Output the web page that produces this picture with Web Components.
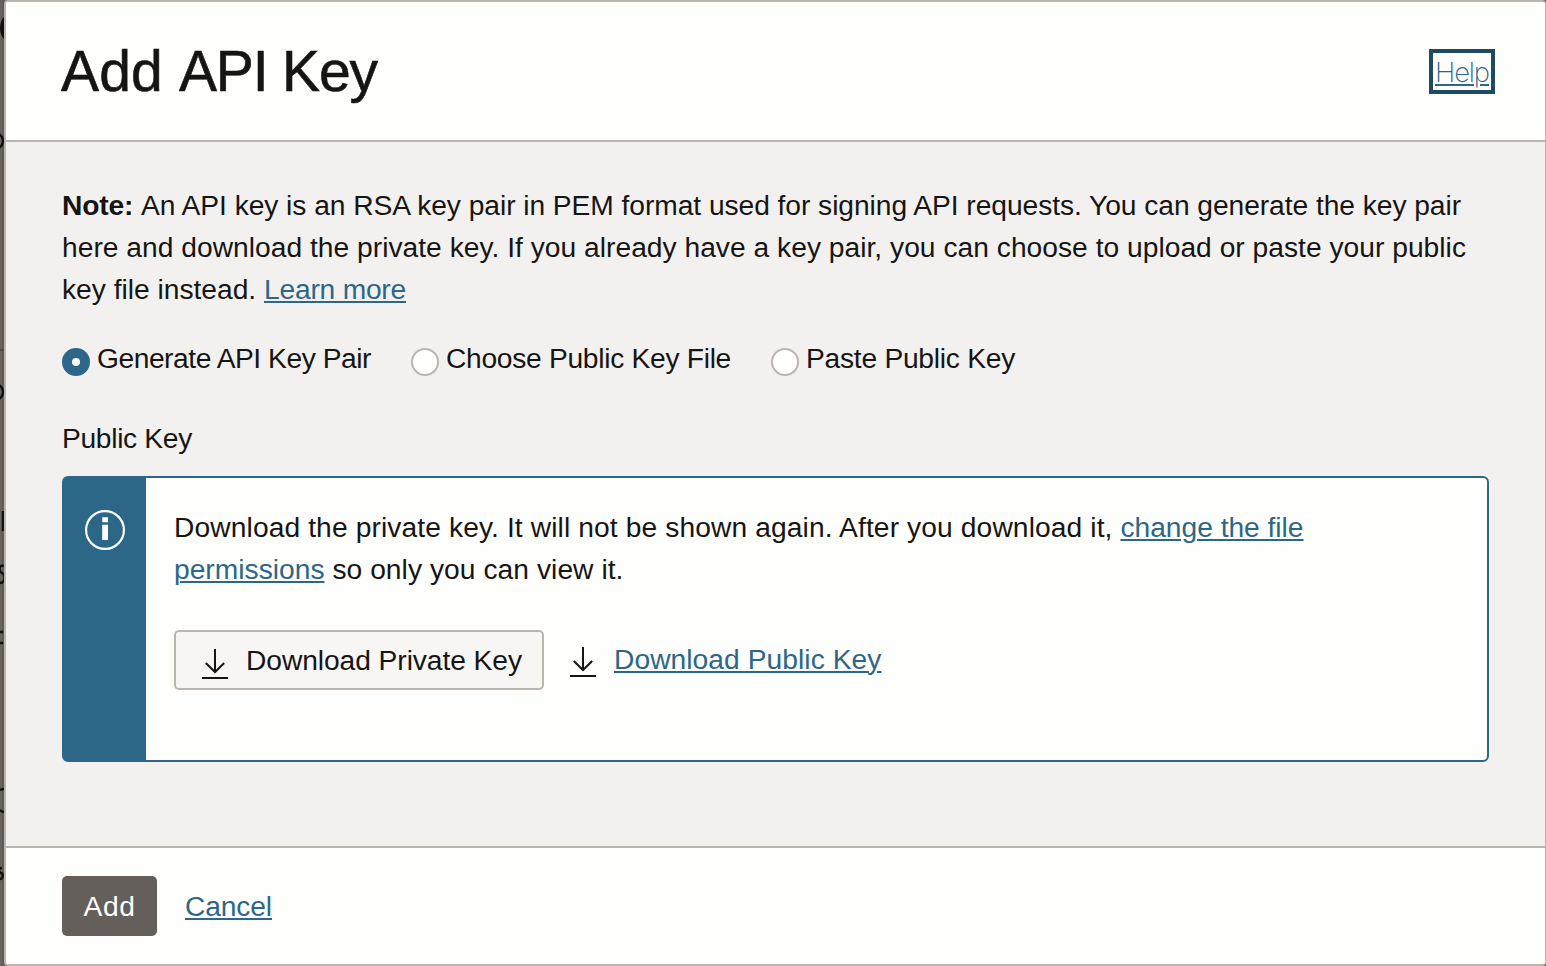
<!DOCTYPE html>
<html lang="en">
<head>
<meta charset="utf-8">
<title>Add API Key</title>
<style>
html,body{margin:0;height:100%;overflow:hidden;background:#67635f}
body{font-family:"Liberation Sans",Arial,sans-serif;font-size:28.2px;line-height:42px;color:#161513}
</style>
</head>
<body>
<key-dialog></key-dialog>
<script>
const define=(name,html,connected)=>customElements.define(name,class extends HTMLElement{
  constructor(){super();this.attachShadow({mode:'open'}).innerHTML=html;}
  connectedCallback(){if(connected)connected.call(this);}
});

// Tracks its slotted text so that the run occupies the width given in "w".
define('text-run',`<style>
:host{display:inline-block;white-space:pre;vertical-align:baseline;flex:none}
:host([link]){color:#2c6788;text-decoration:underline;text-decoration-thickness:2px;text-underline-offset:2px;cursor:pointer}
</style><slot></slot>`,function(){
  const target=parseFloat(this.getAttribute('w'));
  const natural=this.getBoundingClientRect().width;
  this.style.letterSpacing=((target-natural)/this.textContent.length)+'px';
  this.style.width=target+'px';
});

define('download-icon',`<style>
:host{display:block;flex:none;width:26px;height:32px}
svg{display:block}
</style><svg width="26" height="32" viewBox="0 0 26 32" fill="none" stroke="#161513" stroke-width="2"><path d="M13 1v23M3.8 15l9.2 9 9.2-9M0 30h26"/></svg>`);

define('radio-option',`<style>
:host{display:flex;height:42px;flex:none}
i{box-sizing:border-box;width:28px;height:28px;margin:11px 7px 0 0;border:2px solid #bbb5b0;border-radius:50%;background:#fefefc;flex:none}
:host([checked]) i{border:10px solid #2c6788}
</style><i></i><slot></slot>`);

define('info-alert',`<style>
:host{display:flex;box-sizing:border-box;width:1427px;height:286px;border:2px solid #2c6788;border-radius:6px;background:linear-gradient(90deg,#2c6788 84px,#fefefc 84px) border-box;overflow:hidden}
aside{width:82px;flex:none}
svg{display:block;margin:32px 0 0 21px}
section{padding:28px 0 0 28px}
</style><aside><svg width="40" height="40" viewBox="0 0 40 40"><circle cx="20" cy="20" r="18.9" fill="none" stroke="#fff" stroke-width="2.2"/><path fill="#fff" d="M17.3 7.3h5.7v4.9h-5.7zM17.2 14.7h5.8v15.3h-5.8z"/></svg></aside><section><slot></slot></section>`);

define('action-button',`<style>
:host{display:flex;box-sizing:border-box;height:60px;border-radius:5px;flex:none}
:host([kind=primary]){width:95px;padding:9px 0 0 21.5px;background:#645f5b;color:#fff}
:host([kind=outline]){width:370px;padding:7px 0 0 26px;border:2px solid #bbb5b0;background:#f7f6f5}
</style><slot></slot>`);

define('page-backdrop',`<style>
:host{display:block;width:4px;height:966px;flex:none;background:linear-gradient(90deg,#6a6663,#5b5855)}
svg{display:block}
</style><svg width="4" height="966" viewBox="0 0 4 966" fill="none" stroke="#11100f" stroke-width="2.4"><ellipse cx="7" cy="28" rx="7" ry="12" fill="#11100f" stroke="none"/><ellipse cx="-3" cy="141" rx="6" ry="7"/><path stroke="#4b4846" stroke-width="2" d="M0 350h4"/><ellipse cx="-3" cy="392" rx="6" ry="7"/><path d="M3 511v20M4 566c-5-2-6 5-2 7c4 2 3 10-2 10M0 632h3M0 643h3M0 790q2-1 4-1M0 810q2 2 4 2M2 868c-4 0-4 4-1 5s2 6-1 6"/></svg>`);

define('key-dialog',`<style>
:host{display:flex;width:1546px;height:966px}
main{box-sizing:border-box;width:1542px;height:966px;border:2px solid #bbb5b0;border-right-width:1px;border-radius:4px;background:#f3f1f0;display:flex;flex-direction:column;overflow:hidden}
header{height:138px;display:flex;justify-content:space-between;background:#fefefc;border-bottom:2px solid #bbb5b0;flex:none}
h1{display:flex;margin:37px 0 0 55px;font-weight:400;font-size:57px;line-height:64px;-webkit-text-stroke:.6px #161513}
.help{box-sizing:border-box;width:66px;height:45px;margin:47px 50px 0 0;border:4px solid #204a61;padding:0 0 0 2px;font:200 27.5px/39px Inter,sans-serif}
.body{flex:1;min-height:0;padding:42px 0 0 56px}
.line{display:flex;height:42px}
.radios{display:flex;margin-top:27px}
.label{margin-top:38px;height:59px}
.actions{display:flex;margin-top:40px}
footer{height:118px;display:flex;background:#fefefc;border-top:2px solid #bbb5b0;flex:none;padding:28px 0 0 56px;box-sizing:border-box}
</style>
<page-backdrop></page-backdrop>
<main>
<header><h1><text-run w="118">Add </text-run><text-run w="103">API </text-run><text-run w="95">Key</text-run></h1><div class="help"><text-run link w="54">Help</text-run></div></header>
<div class="body">
<div class="line"><text-run w="79"><b>Note:</b> </text-run><text-run w="1320">An API key is an RSA key pair in PEM format used for signing API requests. You can generate the key pair</text-run></div>
<div class="line"><text-run w="1404">here and download the private key. If you already have a key pair, you can choose to upload or paste your public</text-run></div>
<div class="line"><text-run w="202">key file instead. </text-run><text-run link w="142">Learn more</text-run></div>
<div class="radios"><radio-option checked><text-run w="274">Generate API Key Pair</text-run></radio-option><radio-option style="margin-left:40px"><text-run w="285">Choose Public Key File</text-run></radio-option><radio-option style="margin-left:40px"><text-run w="209">Paste Public Key</text-run></radio-option></div>
<div class="label"><text-run w="130">Public Key</text-run></div>
<info-alert>
<div class="line"><text-run w="946.5">Download the private key. It will not be shown again. After you download it, </text-run><text-run link w="183">change the file</text-run></div>
<div class="line"><text-run link w="150.5">permissions</text-run><text-run w="299"> so only you can view it.</text-run></div>
<div class="actions"><action-button kind="outline"><download-icon style="margin-top:9px"></download-icon><text-run w="276" style="margin-left:18px">Download Private Key</text-run></action-button><download-icon style="margin:16px 18px 0 26px"></download-icon><text-run link w="267.5" style="margin-top:8px">Download Public Key</text-run></div>
</info-alert>
</div>
<footer><action-button kind="primary"><text-run w="52">Add</text-run></action-button><text-run link w="87" style="margin:9px 0 0 28px">Cancel</text-run></footer>
</main>`);
</script>
</body>
</html>
